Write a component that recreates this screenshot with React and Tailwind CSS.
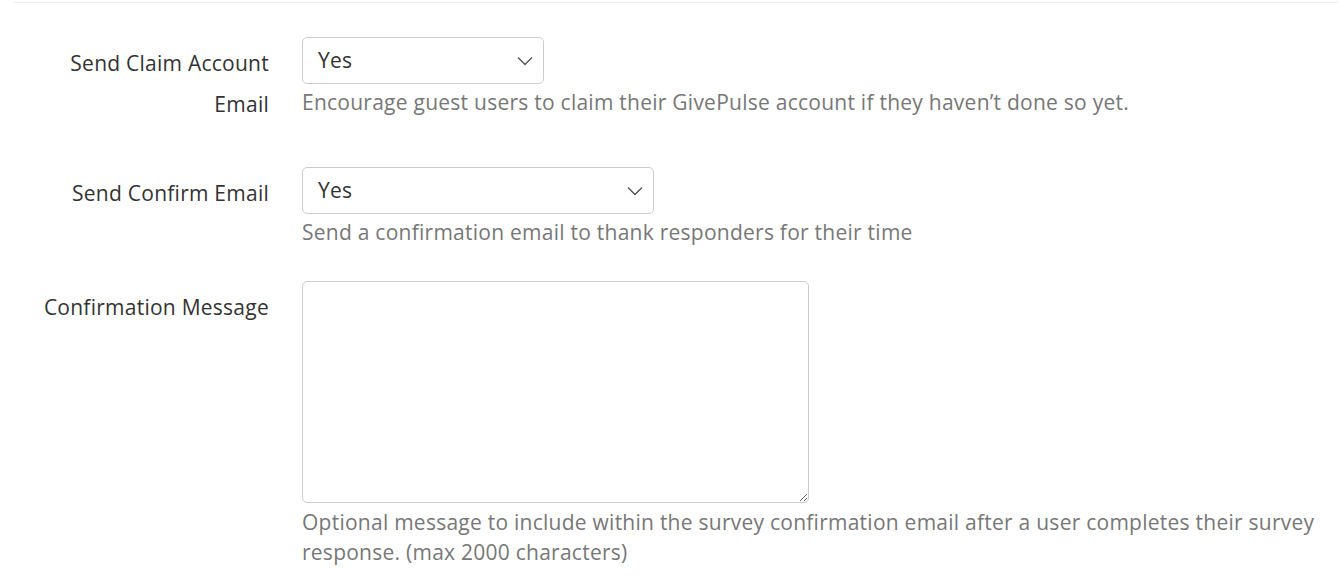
import { useState } from 'react';

function Chevron() {
  return (
    <svg width="16" height="10" viewBox="0 0 16 10" fill="none" className="text-[#555]">
      <path d="M1 1.5l7 7 7-7" stroke="currentColor" strokeWidth="1.4" />
    </svg>
  );
}

function SelectBox({ value, width }) {
  return (
    <div className={`flex items-center justify-between h-[47px] border border-[#ccc] rounded-[5px] pl-[15px] pr-[10px] bg-white ${width}`}>
      <span className="text-[21px] text-[#333]">{value}</span>
      <Chevron />
    </div>
  );
}

function Row({ label, children, className = '' }) {
  return (
    <div className={`flex ${className}`}>
      <label className="w-[269px] shrink-0 text-right text-[21px] leading-[41px] text-[#333] pt-[6px]">
        {label}
      </label>
      <div className="ml-[33px] flex-1">{children}</div>
    </div>
  );
}

export default function App() {
  const [message, setMessage] = useState('');

  return (
    <div className="w-[1340px] h-[584px] bg-white overflow-hidden tracking-[0.25px]" style={{ fontFamily: '"Open Sans", Lato, sans-serif' }}>
      <div className="ml-[14px] mr-[2px] mt-[2px] border-t border-[#eee]" />

      <Row label={<>Send Claim Account<br />Email</>} className="mt-[34px]">
        <SelectBox value="Yes" width="w-[242px]" />
        <p className="mt-[3px] text-[21px] leading-[30px] text-[#777]">
          Encourage guest users to claim their GivePulse account if they haven’t done so yet.
        </p>
      </Row>

      <Row label="Send Confirm Email" className="mt-[42px]">
        <SelectBox value="Yes" width="w-[352px]" />
        <p className="mt-[3px] text-[21px] leading-[30px] text-[#777]">
          Send a confirmation email to thank responders for their time
        </p>
      </Row>

      <Row label="Confirmation Message" className="mt-[34px]">
        <textarea
          value={message}
          onChange={(e) => setMessage(e.target.value)}
          className="block w-[507px] h-[222px] border border-[#ccc] rounded-[5px] resize"
        />
        <p className="mt-[4px] w-[1020px] text-[21px] leading-[30px] text-[#777]">
          Optional message to include within the survey confirmation email after a user completes their survey response. (max 2000 characters)
        </p>
      </Row>
    </div>
  );
}
